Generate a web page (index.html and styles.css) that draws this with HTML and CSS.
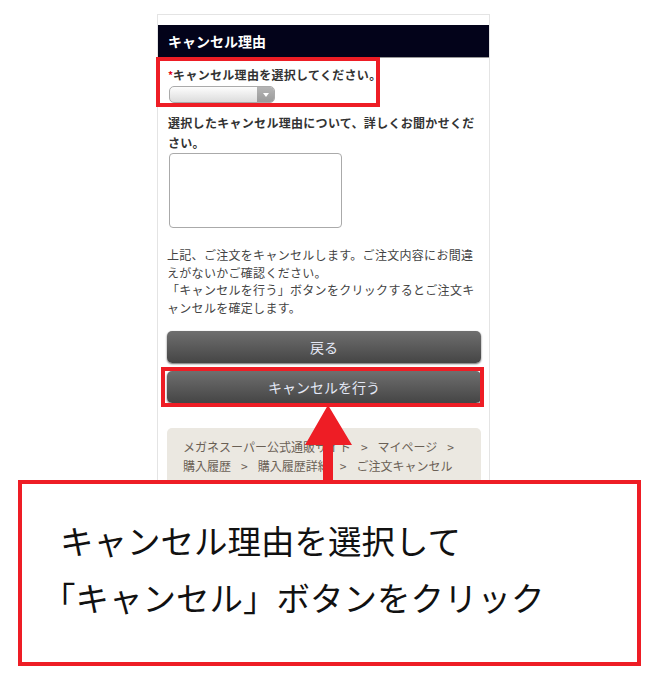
FILE: index.html
```html
<!DOCTYPE html>
<html lang="ja">
<head>
    <meta charset="UTF-8">
    <meta name="viewport" content="width=device-width, initial-scale=1.0">
    <title>キャンセル理由</title>
    <link rel="stylesheet" href="styles.css">
</head>
<body>
    <div class="page">
        <div class="panel">
            <h2 class="panel-title">キャンセル理由</h2>
            <div class="panel-body">
                <div class="field">
                    <p class="field-label"><span class="req">*</span>キャンセル理由を選択してください。</p>
                    <div class="select"><span class="select-arrow"></span></div>
                </div>

                <div class="field field-text">
                    <p class="field-label">選択したキャンセル理由について、詳しくお聞かせください。</p>
                    <textarea class="reason-text"></textarea>
                </div>

                <p class="note">上記、ご注文をキャンセルします。ご注文内容にお間違えがないかご確認ください。<br>「キャンセルを行う」ボタンをクリックするとご注文キャンセルを確定します。</p>

                <button class="btn btn-back">戻る</button>
                <button class="btn btn-cancel">キャンセルを行う</button>

                <div class="breadcrumb">
                    <span>メガネスーパー公式通販サイト</span><span class="sep">&gt;</span><span>マイページ</span><span class="sep">&gt;</span><span>購入履歴</span><span class="sep">&gt;</span><span>購入履歴詳細</span><span class="sep">&gt;</span><span>ご注文キャンセル</span>
                </div>
            </div>
        </div>

        <!-- 注釈 -->
        <div class="mark mark-select"></div>
        <div class="mark mark-button"></div>
        <svg class="arrow" width="50" height="80" viewBox="0 0 50 80">
            <polygon points="23,0 0,40 18,40 18,80 28,80 28,40 47,40" fill="#ee1d25"/>
        </svg>

        <div class="callout">
            <p class="callout-line callout-first">キャンセル理由を選択して</p>
            <p class="callout-line">「キャンセル」ボタンをクリック</p>
        </div>
    </div>
</body>
</html>
```

FILE: styles.css
```css
body {
    margin: 0;
    background: #fff;
    font-family: "Noto Sans CJK JP", "Noto Sans", sans-serif;
    color: #333;
}
p {
    margin: 0;
}
.page {
    position: relative;
    width: 655px;
    height: 683px;
    overflow: hidden;
}

/* パネル */
.panel {
    margin: 14px 0 0 157px;
    width: 331px;
    border: 1px solid #e4e4e4;
    border-bottom: none;
    padding: 10px 0 12px;
}
.panel-title {
    margin: 0;
    height: 32px;
    line-height: 32px;
    padding-left: 10px;
    background-color: #03031a;
    border-bottom: 1px solid #999;
    color: #fff;
    font-size: 14px;
    font-weight: bold;
}
.panel-body {
    padding: 7px 7px 0 9px;
}
.field-label {
    font-size: 12px;
    letter-spacing: 0.3px;
    line-height: 20px;
    font-weight: bold;
    color: #333;
    padding-left: 1px;
}
.req {
    color: #e60012;
    font-size: 10px;
    vertical-align: top;
    letter-spacing: 0;
}
.select {
    margin: 1px 0 0 2px;
    width: 104px;
    height: 15px;
    border: 1px solid #aaa;
    border-radius: 5px;
    background: linear-gradient(#fdfdfd, #dcdcdc);
    display: flex;
    justify-content: flex-end;
    overflow: hidden;
}
.select-arrow {
    width: 17px;
    height: 15px;
    background: linear-gradient(#b5b5b5, #9a9a9a);
    display: flex;
    align-items: center;
    justify-content: center;
}
.select-arrow::after {
    content: "";
    border-left: 3px solid transparent;
    border-right: 3px solid transparent;
    border-top: 4px solid #fff;
}
.field-text {
    margin-top: 10px;
}
.reason-text {
    display: block;
    margin-left: 2px;
    width: 173px;
    height: 75px;
    box-sizing: border-box;
    border: 1px solid #aaa;
    border-radius: 4px;
    resize: none;
    background: #fff;
}
.note {
    margin-top: 18px;
    font-size: 12px;
    letter-spacing: 0.3px;
    line-height: 17.5px;
    color: #444;
    line-break: loose;
}

/* ボタン */
.btn {
    display: block;
    width: 314px;
    height: 32px;
    border: none;
    border-radius: 5px;
    background: linear-gradient(#6f6f6f, #454545);
    box-shadow: 0 1px 2px rgba(0, 0, 0, 0.6);
    color: #e4e8f6;
    font-family: inherit;
    font-size: 14px;
    line-height: 32px;
    padding: 0;
}
.btn-back {
    margin-top: 15px;
}
.btn-cancel {
    margin-top: 8px;
}

/* パンくず */
.breadcrumb {
    margin-top: 25px;
    width: 314px;
    box-sizing: border-box;
    padding: 9px 12px 14px 16px;
    background-color: #ebe8e1;
    border-radius: 5px;
    font-size: 12px;
    line-height: 19px;
    color: #6a6055;
}
.sep {
    display: inline-block;
    padding: 0 10px;
}

/* 注釈 */
.mark {
    position: absolute;
    border: 4px solid #ee1d25;
    box-sizing: border-box;
}
.mark-select {
    left: 156px;
    top: 57px;
    width: 224px;
    height: 50px;
}
.mark-button {
    left: 161px;
    top: 367px;
    width: 323px;
    height: 40px;
}
.arrow {
    position: absolute;
    left: 305px;
    top: 405px;
}
.callout {
    position: absolute;
    left: 18px;
    top: 480px;
    width: 623px;
    height: 186px;
    box-sizing: border-box;
    border: 4px solid #ee1d25;
    background: #fff;
    padding: 27px 0 0 20px;
}
.callout-line {
    font-size: 33.5px;
    line-height: 57px;
    color: #111;
}
.callout-first {
    padding-left: 18px;
}
```
